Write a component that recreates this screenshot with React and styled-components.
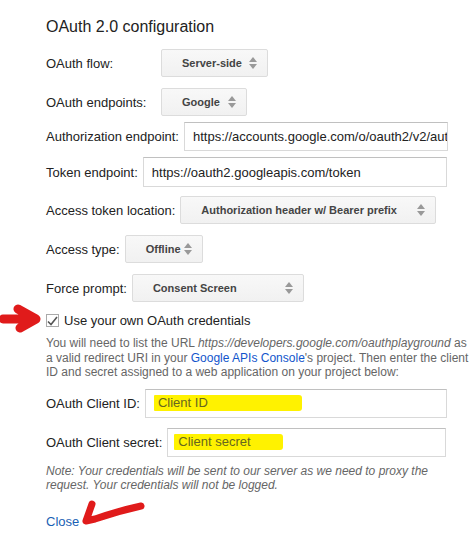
import React from "react";
import styled, { createGlobalStyle } from "styled-components";

const Global = createGlobalStyle`
  body {
    margin: 0;
    background: #fff;
    font-family: "Liberation Sans", Arial, sans-serif;
    color: #222;
  }
`;

const Page = styled.div`
  position: relative;
  width: 476px;
  height: 544px;
  overflow: hidden;
  padding: 0 0 0 46px;
  box-sizing: border-box;
`;

const Title = styled.h2`
  margin: 0;
  padding-top: 17px;
  font-size: 16px;
  font-weight: normal;
  line-height: 20px;
  color: #222;
`;

const Row = styled.div`
  display: flex;
  align-items: center;
  gap: 5px;
  margin-top: ${(p) => p.$top}px;
  font-size: 13px;
`;

const Label = styled.label`
  flex: none;
  width: ${(p) => (p.$width ? `${p.$width}px` : "auto")};
  color: #222;
`;

const Select = styled.div`
  display: flex;
  align-items: center;
  justify-content: space-between;
  box-sizing: border-box;
  width: ${(p) => p.$width}px;
  height: 28px;
  padding: 0 10px 0 ${(p) => p.$pad || 20}px;
  background: linear-gradient(#f8f8f8, #f1f1f1);
  border: 1px solid #dcdcdc;
  border-radius: 2px;
  font-size: 11px;
  font-weight: bold;
  color: #444;
`;

const Arrows = styled.span`
  display: flex;
  flex-direction: column;
  gap: 2px;
`;

const Tri = styled.span`
  width: 0;
  height: 0;
  border-left: 4px solid transparent;
  border-right: 4px solid transparent;
  ${(p) => (p.$down ? "border-top: 5px solid #999;" : "border-bottom: 5px solid #999;")}
`;

const Input = styled.div`
  box-sizing: border-box;
  width: ${(p) => p.$width}px;
  height: ${(p) => p.$height || 29}px;
  display: flex;
  align-items: center;
  padding-left: ${(p) => p.$pad || 8}px;
  border: 1px solid #d9d9d9;
  border-top-color: #c0c0c0;
  background: #fff;
  font-size: 13px;
  color: #222;
  white-space: nowrap;
  overflow: hidden;
`;

const Mark = styled.span`
  display: inline-block;
  width: ${(p) => p.$width}px;
  padding: 1px 0 1px 4px;
  background: #fff200;
  color: #66661f;
  line-height: 14px;
  border-radius: 1px 3px 3px 1px;
`;

const Check = styled.span`
  box-sizing: border-box;
  width: 13px;
  height: 13px;
  border: 1px solid #aaa;
  background: #fff;
  display: flex;
  align-items: center;
  justify-content: center;
`;

const CheckLabel = styled.span`
  font-size: 13px;
  color: #222;
`;

const Help = styled.p`
  margin: ${(p) => p.$top}px 0 0;
  font-size: 12px;
  line-height: 14.5px;
  color: #666;
  width: 428px;
  font-style: ${(p) => (p.$italic ? "italic" : "normal")};
`;

const Link = styled.a`
  color: #1155cc;
  text-decoration: none;
`;

const Close = styled.a`
  display: inline-block;
  margin-top: 21px;
  font-size: 13px;
  color: #1a5fb4;
  text-decoration: none;
`;

const Scribble = styled.svg`
  position: absolute;
  left: 0;
  top: 0;
  pointer-events: none;
`;

const Updown = () => (
  <Arrows>
    <Tri />
    <Tri $down />
  </Arrows>
);

export default function App() {
  return (
    <>
      <Global />
      <Page>
        <Title>OAuth 2.0 configuration</Title>
        <Row $top={12}>
          <Label $width={110}>OAuth flow:</Label>
          <Select $width={107}>Server-side<Updown /></Select>
        </Row>
        <Row $top={11}>
          <Label $width={110}>OAuth endpoints:</Label>
          <Select $width={86}>Google<Updown /></Select>
        </Row>
        <Row $top={6}>
          <Label>Authorization endpoint:</Label>
          <Input $width={264}>https://accounts.google.com/o/oauth2/v2/auth</Input>
        </Row>
        <Row $top={6}>
          <Label>Token endpoint:</Label>
          <Input $width={304} $height={30}>https://oauth2.googleapis.com/token</Input>
        </Row>
        <Row $top={9}>
          <Label>Access token location:</Label>
          <Select $width={256}>Authorization header w/ Bearer prefix<Updown /></Select>
        </Row>
        <Row $top={11}>
          <Label>Access type:</Label>
          <Select $width={78}>Offline<Updown /></Select>
        </Row>
        <Row $top={11}>
          <Label>Force prompt:</Label>
          <Select $width={172}>Consent Screen<Updown /></Select>
        </Row>
        <Row $top={11}>
          <Check>
            <svg width="11" height="10" viewBox="0 0 11 10">
              <path d="M1 5.5 L4 8.5 L10 1" fill="none" stroke="#555" strokeWidth="1.6" />
            </svg>
          </Check>
          <CheckLabel>Use your own OAuth credentials</CheckLabel>
        </Row>
        <Help $top={8}>
          You will need to list the URL <i>https://developers.google.com/oauthplayground</i> as
          a valid redirect URI in your <Link href="#">Google APIs Console</Link>'s project. Then enter the client
          ID and secret assigned to a web application on your project below:
        </Help>
        <Row $top={9}>
          <Label>OAuth Client ID:</Label>
          <Input $width={302}><Mark $width={144}>Client ID</Mark></Input>
        </Row>
        <Row $top={10}>
          <Label>OAuth Client secret:</Label>
          <Input $width={279} $pad={6}><Mark $width={105}>Client secret</Mark></Input>
        </Row>
        <Help $top={7} $italic>
          Note: Your credentials will be sent to our server as we need to proxy the
          request. Your credentials will not be logged.
        </Help>
        <Close href="#">Close</Close>
        <Scribble width="476" height="544">
          <path d="M3 319 L24 319 M18 309 L36 319 L20 328" fill="none" stroke="#e01b1b" strokeWidth="9" strokeLinecap="round" strokeLinejoin="round" />
          <path d="M92 504 L86 521 L95 519 Q118 511 141 506" fill="none" stroke="#e01b1b" strokeWidth="7" strokeLinecap="round" strokeLinejoin="round" />
        </Scribble>
      </Page>
    </>
  );
}
